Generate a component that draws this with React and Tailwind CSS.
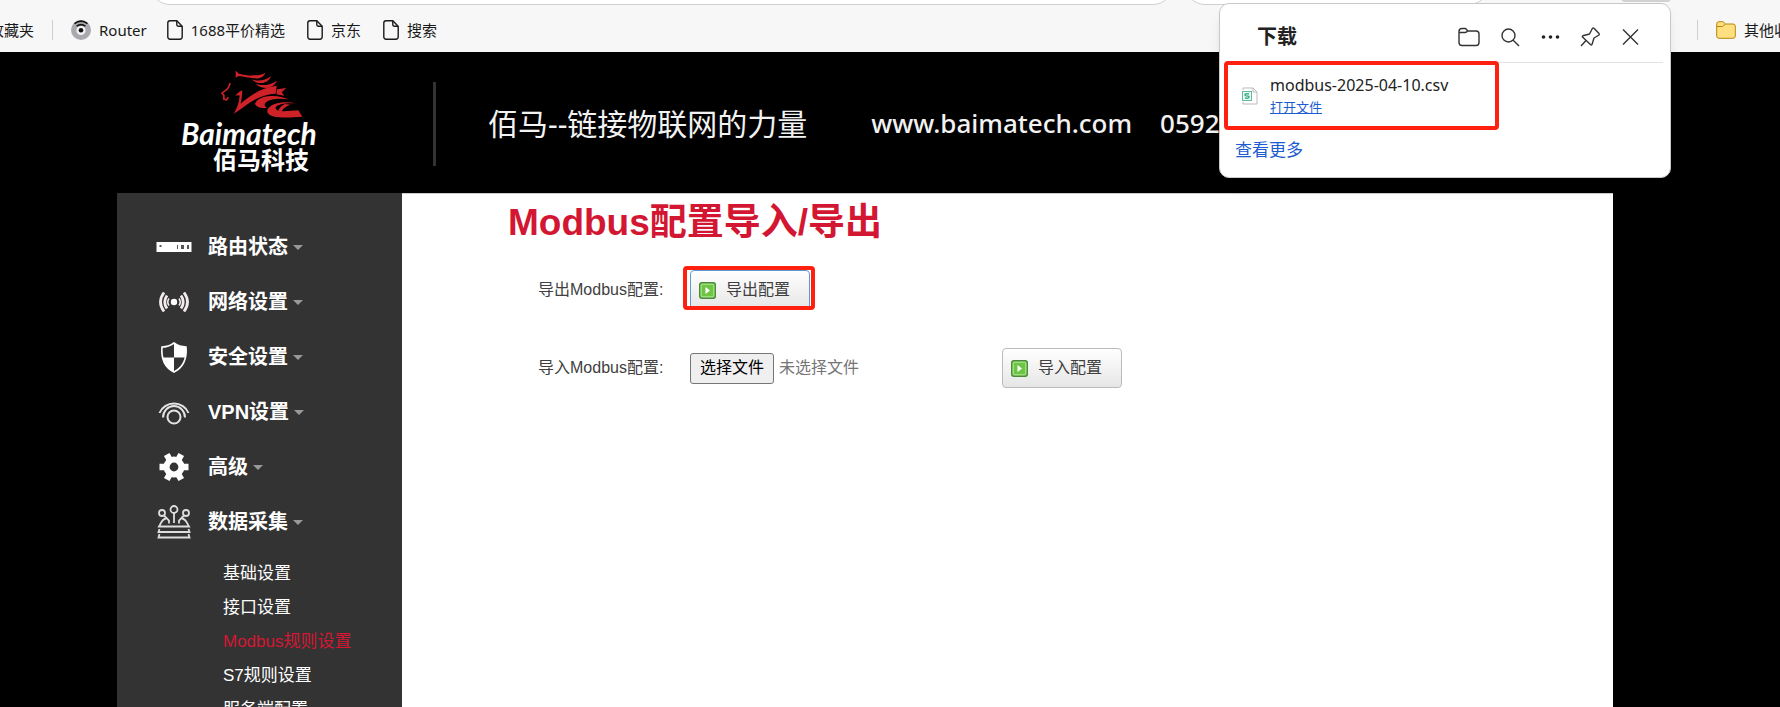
import React, { useState } from "react";

const bookmarks = ["1688平价精选", "京东", "搜索"];

const subItems = ["基础设置", "接口设置", "Modbus规则设置", "S7规则设置", "服务端配置"];

const PageIcon = () => (
  <svg width="16" height="20" viewBox="0 0 16 20" fill="none" stroke="#1a1a1a" strokeWidth="1.4">
    <path d="M3 .8h6.8L15.2 6.2V17a2.2 2.2 0 0 1-2.2 2.2H3A2.2 2.2 0 0 1 .8 17V3A2.2 2.2 0 0 1 3 .8z" />
    <path d="M9.8 1v3.8a1.4 1.4 0 0 0 1.4 1.4H15" />
  </svg>
);

const RouterFavicon = () => (
  <svg width="20" height="20" viewBox="0 0 20 20">
    <circle cx="10" cy="10" r="10" fill="#a9aaae" />
    <circle cx="10" cy="10.5" r="4.6" fill="#f2f2f2" />
    <circle cx="10" cy="10.3" r="2.3" fill="#111" />
    <path d="M3.5 3.6Q10-1.4 16.5 3.6M5.6 6.2Q10 3 14.4 6.2" fill="none" stroke="#111" strokeWidth="1.6" />
  </svg>
);

const HorseLogo = () => (
  <svg className="block" width="84" height="48" viewBox="178 34 252 144" fill="#cf2228">
    {/* Ear and mane */}
    <path d="M228 36l10 9c16 4 30 6 46 5 14 0 24-2 33-8-5 14-18 18-32 17-18-1-32-6-48-7l-9 5z" />
    <path d="M276 62c16 6 38 6 58-9-6 16-22 22-36 20-8-1-16-5-22-11z" />
    <path d="M288 76c20 6 44 4 64-10-6 14-20 20-30 22-14 0-26-4-34-12z" />
    {/* Face */}
    <path d="M212 74c-4 6-4 12-10 18-6 4-12 8-15 12l6 7-1 10 8 3 6-8" fill="none" stroke="#cf2228" strokeWidth="5" />
    {/* Jaw and neck */}
    <path d="M227 112c6-8 12-14 21-17-1 16-2 28-5 40 26-22 58-48 108-54l-3 24c-34 2-58 14-76 26-18 12-32 24-50 34 10-16 16-32 18-54-4-2-8-1-13 1z" />
    <path d="M352 92l28-4-14 13 8 10-24-4z" />
    {/* Flowing chest */}
    <path d="M386 122c-30-4-58 0-68 10-6 6-2 12 4 16-18 2-34-4-36-12 4-14 22-22 46-24 22-1 40 3 54 10z" />
    <path d="M408 134c-30-2-54 2-60 12-2 8 10 12 24 12l44-3 12 19c-30 2-62 4-84 0-16-3-24-12-20-22 10-18 48-26 84-18z" />
    <path d="M376 136c-12 6-18 12-20 22l10 2c2-10 12-16 26-22z" />
  </svg>
);

const PlayIcon = () => (
  <svg width="17" height="17" viewBox="0 0 17 17">
    <rect x=".7" y=".7" width="15.6" height="15.6" rx="2" fill="#6cc644" stroke="#4c8a3a" strokeWidth="1.4" />
    <rect x="2.2" y="2.2" width="12.6" height="12.6" rx="1" fill="none" stroke="#b8e6a0" />
    <path d="M6.5 5v7l4.5-3.5z" fill="#fff" />
  </svg>
);

const StatusIcon = () => (
  <svg width="36" height="34" viewBox="0 0 36 34">
    <rect x="0.5" y="12" width="35" height="10" fill="#fff" />
    <path d="M3.5 15h2v2h-2zM21 15h1v4h-1zM25 15h3v4h-3zM31 15h2v4h-2z" fill="#555" />
  </svg>
);

const NetworkIcon = () => (
  <svg width="36" height="34" viewBox="0 0 36 34" fill="none" stroke="#f3eaec" strokeWidth="2.8">
    <circle cx="18" cy="17" r="3.2" fill="#fff" stroke="none" />
    <path d="M8 7.5Q1 17 8 26.5M11 10.5Q6.5 17 11 23.5M28 7.5Q35 17 28 26.5M25 10.5Q29.5 17 25 23.5" />
    <path d="M13 13.5Q10.5 17 13 20.5M23 13.5Q25.5 17 23 20.5" strokeWidth="1.6" />
  </svg>
);

const ShieldIcon = () => (
  <svg width="36" height="34" viewBox="0 0 36 34">
    <path d="M18 3c4 3 8 4 12 4 1 12-2 20-12 25C8 27 5 19 6 7c4 0 8-1 12-4z" fill="none" stroke="#fff" strokeWidth="1.6" />
    <path d="M18 3c4 3 8 4 12 4 .4 4 .3 7.5-.4 10.5H18zM6.4 17.5H18V32C11 28.5 7.5 24 6.4 17.5z" fill="#fff" />
  </svg>
);

const VpnIcon = () => (
  <svg width="36" height="34" viewBox="0 0 36 34" fill="none" stroke="#e4e4e4" strokeWidth="2">
    <circle cx="18" cy="22" r="6.5" />
    <path d="M7 22.5A11 11.5 0 0 1 29 22.5M3.5 18A15.5 14.5 0 0 1 32.5 18" />
  </svg>
);

const GearIcon = () => (
  <svg width="36" height="34" viewBox="0 0 36 34">
    <g stroke="#fff" strokeWidth="6.4">
      <path d="M3.5 17h29M10.7 4.5l14.6 25M25.3 4.5l-14.6 25" />
    </g>
    <circle cx="18" cy="17" r="10.5" fill="#fff" />
    <circle cx="18" cy="17" r="4.4" fill="#333" />
  </svg>
);

const CollectIcon = () => (
  <svg width="36" height="34" viewBox="0 0 36 34" fill="none" stroke="#ddd" strokeWidth="1.8">
    <circle cx="18" cy="4.5" r="3.5" />
    <circle cx="6" cy="8" r="3" />
    <circle cx="30" cy="8" r="3" />
    <path d="M18 8v10M8 10.5l5 5v3M28 10.5l-5 5v3M10 13.5C6 14 5 18 3 21.5h30c-2-3.5-3-7.5-7-8M3.5 24l-1 3h31l-1-3M3.5 29l-1 3.5h31l-1-3.5" />
  </svg>
);

const menu = [
  { label: "路由状态", Icon: StatusIcon },
  { label: "网络设置", Icon: NetworkIcon },
  { label: "安全设置", Icon: ShieldIcon },
  { label: "VPN设置", Icon: VpnIcon },
  { label: "高级", Icon: GearIcon },
  { label: "数据采集", Icon: CollectIcon },
];

const BookmarksBar = () => (
  <div className="h-[52px] shrink-0 bg-[#f7f7f7] overflow-hidden font-['Noto_Sans','Noto_Sans_CJK_SC',sans-serif] text-[15px] text-[#1a1a1a]">
    {/* Bottom edge of the address bar */}
    <div className="h-[5px] flex items-end overflow-hidden pl-[150px] pr-[109px]">
      <div className="flex-1 h-10 shrink-0 rounded-full border border-[#cfcfcf] bg-white" />
      <div className="ml-3 w-[304px] h-10 shrink-0 rounded-full border border-[#cfcfcf] bg-white" />
      <div className="ml-[132px] mb-[3px] w-[50px] h-10 shrink-0 rounded bg-[#d2d2d2]" />
    </div>
    <nav className="h-[50px] flex items-center whitespace-nowrap">
      <a href="#" className="-ml-[11px]">收藏夹</a>
      <span className="ml-[18px] w-px h-5 bg-[#cfcfcf]" />
      <a href="#" className="ml-[18px] flex items-center gap-2">
        <RouterFavicon />
        Router
      </a>
      <div className="ml-5 flex items-center gap-[22px]">
        {bookmarks.map((name) => (
          <a key={name} href="#" className="flex items-center gap-2">
            <PageIcon />
            {name}
          </a>
        ))}
      </div>
      <span className="ml-auto w-px h-5 shrink-0 bg-[#cfcfcf]" />
      <a href="#" className="ml-[18px] w-16 flex shrink-0 items-center gap-2">
        <svg className="shrink-0" width="20" height="18" viewBox="0 0 20 18" fill="#ffdf80" stroke="#b8860b">
          <path d="M.7 3Q.7.7 3 .7H7L9.5 3H17Q19.3 3 19.3 5V15Q19.3 17.3 17 17.3H3Q.7 17.3.7 15z" />
          <path d="M.7 5.5H6.5L9.5 3" fill="none" />
        </svg>
        其他收藏夹
      </a>
    </nav>
  </div>
);

const DownloadPanel = () => (
  <section className="absolute top-[3px] right-[109px] w-[452px] h-[175px] rounded-[10px] border border-[#c8c8c8] bg-white shadow-lg font-['Noto_Sans','Noto_Sans_CJK_SC',sans-serif] text-[#222]">
    <header className="mx-[7px] h-[59px] flex items-center justify-between border-b border-[#e3e3e3] pt-[7px] pl-[30px] pr-[23px]">
      <h2 className="text-xl font-bold">下载</h2>
      <div className="flex items-center gap-5">
        <button aria-label="打开下载文件夹">
          <svg width="22" height="20" viewBox="0 0 22 20" fill="none" stroke="#333" strokeWidth="1.4">
            <path d="M1 4.5Q1 1.5 4 1.5H7Q8 1.5 8.5 2.5L9.5 4H18Q21 4 21 7V15.5Q21 18.5 18 18.5H4Q1 18.5 1 15.5zM1 5.5H7Q8.5 5.5 9.5 4" />
          </svg>
        </button>
        <button aria-label="搜索下载">
          <svg width="20" height="20" viewBox="0 0 20 20" fill="none" stroke="#333" strokeWidth="1.4">
            <circle cx="8.5" cy="8.5" r="6.5" />
            <path d="M13.2 13.2L19 19" />
          </svg>
        </button>
        <button aria-label="更多选项">
          <svg width="20" height="20" viewBox="0 0 20 20" fill="#222">
            <circle cx="3.5" cy="10" r="1.8" />
            <circle cx="10.5" cy="10" r="1.8" />
            <circle cx="17.5" cy="10" r="1.8" />
          </svg>
        </button>
        <button aria-label="固定">
          <svg width="20" height="20" viewBox="0 0 20 20" fill="none" stroke="#333" strokeWidth="1.4" strokeLinejoin="round">
            <path d="M12.5 1.2Q13.2.7 14 1.3L19 6.5Q19.5 7.3 19 8L14 11 12 17.5Q11.5 18.3 10.7 17.7L2.5 10Q2 9.3 2.8 8.7L9.5 7zM6 13.5L1 19" />
          </svg>
        </button>
        <button aria-label="关闭">
          <svg width="20" height="20" viewBox="0 0 20 20" fill="none" stroke="#333" strokeWidth="1.4">
            <path d="M3 2.5l15 15M18 2.5l-15 15" />
          </svg>
        </button>
      </div>
    </header>
    <div className="relative z-10 -mt-[2px] ml-1 w-[275px] h-[69px] flex items-center rounded border-4 border-[#ff2010] bg-white pl-[14px]">
      <svg width="16" height="18" viewBox="0 0 16 18" fill="none">
        <path d="M1 3V1h10l4 4v12H1v-2" stroke="#bbb" />
        <path d="M11 1v4h4" stroke="#bbb" />
        <rect x=".5" y="4.5" width="9" height="9" fill="#e9f8f1" stroke="#5fbf9a" />
        <path d="M7 6.8H4.2Q3 6.8 3 7.8T4.2 9H5.8Q7 9 7 10T5.8 11.2H3" stroke="#27a373" strokeWidth="1.2" />
      </svg>
      <div className="ml-3 flex flex-col pb-[2px]">
        <span className="text-base leading-6">modbus-2025-04-10.csv</span>
        <a href="#" className="text-[13px] leading-5 text-[#1d5bd0] underline">打开文件</a>
      </div>
    </div>
    <a href="#" className="mt-2 ml-[15px] block text-[17px] leading-6 text-[#1d5bd0]">查看更多</a>
  </section>
);

const SiteHeader = () => (
  <header className="h-[141px] shrink-0 flex items-center bg-black pl-[181px] text-[#f2f2f2] whitespace-nowrap font-['Noto_Sans','Noto_Sans_CJK_SC',sans-serif]">
    <a href="#" className="w-[140px] flex flex-col pb-1">
      <span className="ml-[38px]">
        <HorseLogo />
      </span>
      <span className="font-['Lato','Liberation_Sans',sans-serif] text-[30px] leading-[30px] font-bold italic text-white">Baimatech</span>
      <span className="ml-8 text-2xl leading-6 font-bold text-white">佰马科技</span>
    </a>
    <span className="ml-[112px] mt-[3px] w-[3px] h-[84px] bg-[#333]" />
    <span className="ml-[52px] mt-[2px] text-[30px]">佰马--链接物联网的力量</span>
    <span className="ml-16 mt-[2px] text-[26px] font-medium">www.baimatech.com</span>
    <span className="ml-7 mt-[2px] text-[26px] font-medium">0592</span>
  </header>
);

const Sidebar = ({ active, onSelect }) => (
  <aside className="w-[285px] shrink-0 bg-[#333] pt-[26px] text-white">
    {menu.map(({ label, Icon }) => (
      <button key={label} className="h-[55px] w-full flex items-center pl-[39px] text-xl font-bold">
        <Icon />
        <span className="ml-4">{label}</span>
        <svg className="ml-[5px] mt-[2px]" width="10" height="5" viewBox="0 0 10 5" fill="#999">
          <path d="M0 0h10L5 5z" />
        </svg>
      </button>
    ))}
    <ul className="pt-2 pl-[106px]">
      {subItems.map((item) => (
        <li key={item} className="h-[34px]">
          <a
            href="#"
            onClick={() => onSelect(item)}
            className={`text-[17px] leading-[34px] ${active === item ? "text-[#d31733]" : "text-white"}`}
          >
            {item}
          </a>
        </li>
      ))}
    </ul>
  </aside>
);

const App = () => {
  const [active, setActive] = useState("Modbus规则设置");
  const [fileName, setFileName] = useState("");

  return (
    <div className="relative h-screen flex flex-col overflow-hidden bg-black font-['Liberation_Sans','Noto_Sans_CJK_SC',sans-serif]">
      <BookmarksBar />
      <SiteHeader />

      <div className="flex-1 min-h-0 flex pl-[117px] pr-[167px]">
        <Sidebar active={active} onSelect={setActive} />

        <main className="flex-1 border-t border-[#ccc] bg-white pl-[106px] text-base text-[#404040]">
          <h1 className="text-[37px] leading-[58px] font-bold text-[#d31733]">Modbus配置导入/导出</h1>

          {/* Export */}
          <div className="mt-[18px] flex items-center">
            <span className="w-[182px] pl-[30px]">导出Modbus配置:</span>
            <div className="relative">
              <button className="w-[120px] h-10 flex items-center gap-[10px] rounded border border-[#5a9bd5] bg-linear-to-b from-white to-[#e6e6e6] pl-2">
                <PlayIcon />
                导出配置
              </button>
              <div className="pointer-events-none absolute -top-1 -left-[7px] w-[132px] h-11 rounded border-4 border-[#ff2010]" />
            </div>
          </div>

          {/* Import */}
          <div className="mt-[38px] flex items-center">
            <span className="w-[182px] pl-[30px]">导入Modbus配置:</span>
            <label className="w-[312px] flex items-center gap-[5px]">
              <input
                type="file"
                aria-label="选择文件"
                className="sr-only"
                onChange={(e) => setFileName(e.target.files[0]?.name || "")}
              />
              <span className="h-[31px] flex items-center rounded-[3px] border border-[#767676] bg-[#efefef] px-[9px] text-black">选择文件</span>
              <span className="text-[#757575]">{fileName || "未选择文件"}</span>
            </label>
            <button className="w-[120px] h-10 flex items-center gap-[10px] rounded border border-[#bbb] bg-linear-to-b from-white to-[#e6e6e6] pl-2">
              <PlayIcon />
              导入配置
            </button>
          </div>
        </main>
      </div>

      <DownloadPanel />
    </div>
  );
};

export default App;
